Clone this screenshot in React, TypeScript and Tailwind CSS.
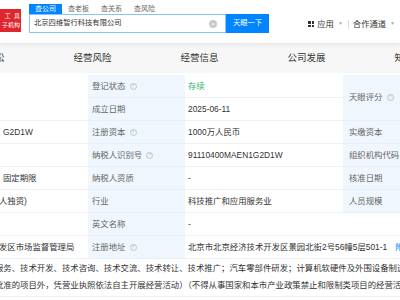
import React from "react";

const font = { fontFamily: '"Liberation Sans", "Noto Sans CJK SC", sans-serif' };

function Help() {
  return (
    <span className="ml-[4px] inline-flex h-[7px] w-[7px] items-center justify-center rounded-full border border-[#b9c6d8] text-[5px] leading-none text-[#b9c6d8]">
      ?
    </span>
  );
}

function Label({ children, help, className = "" }: { children: React.ReactNode; help?: boolean; className?: string }) {
  return (
    <div className={`flex items-center whitespace-nowrap border-b border-[#e6eef8] bg-[#eff6fd] pl-[4px] text-[#666] ${className}`}>
      {children}
      {help && <Help />}
    </div>
  );
}

function Value({ children, className = "" }: { children?: React.ReactNode; className?: string }) {
  return (
    <div className={`flex items-center overflow-hidden whitespace-nowrap border-b border-[#eef0f3] pl-[3px] text-[#333] ${className}`}>
      {children}
    </div>
  );
}

export default function App() {
  return (
    <div className="relative h-[300px] w-[400px] overflow-hidden bg-white" style={font}>
      {/* header */}
      <div className="relative z-10 flex h-[43px] bg-white shadow-[0_2px_4px_rgba(0,0,0,0.07)]">
        <div className="mt-[9px] flex h-[23px] w-[21px] flex-col items-end justify-center overflow-hidden bg-[#e0252c] pr-[1px] text-[6px] leading-[9px] text-white">
          <span className="whitespace-nowrap">工&nbsp;&nbsp;具</span>
          <span className="whitespace-nowrap">子机构</span>
        </div>

        <div className="ml-[8px] mt-[4px] flex flex-col">
          <div className="flex h-[10px] text-[7px] leading-[10px]">
            <span className="w-[33px] bg-[#0084ff] text-center text-white">查公司</span>
            <span className="w-[33px] text-center text-[#666]">查老板</span>
            <span className="w-[33px] text-center text-[#666]">查关系</span>
            <span className="w-[33px] text-center text-[#666]">查风险</span>
          </div>
          <div className="flex h-[19px]">
            <div className="flex w-[197px] items-center border border-[#86c1fc] pl-[4px] pr-[8px] text-[7.3px] text-[#333]">
              <span className="whitespace-nowrap">北京四维智行科技有限公司</span>
              <span className="ml-auto flex h-[8px] w-[8px] items-center justify-center rounded-full bg-[#c9c9c9] text-[6px] leading-none text-white">
                ×
              </span>
            </div>
            <div className="flex w-[43px] items-center justify-center bg-[#0084ff] text-[7.3px] text-white">天眼一下</div>
          </div>
        </div>

        <div className="ml-auto mt-[19px] flex h-[10px] items-center pr-[5px] text-[8.3px] text-[#333]">
          <span className="grid h-[6px] w-[6px] grid-cols-2 gap-[1px]">
            <span className="bg-[#333]" />
            <span className="bg-[#333]" />
            <span className="bg-[#333]" />
            <span className="bg-[#333]" />
          </span>
          <span className="ml-[3px]">应用</span>
          <span className="ml-[4px] text-[5px] text-[#aaa]">▼</span>
          <span className="ml-[5px] h-[9px] w-px bg-[#ddd]" />
          <span className="ml-[4px]">合作通道</span>
          <span className="ml-[4px] text-[5px] text-[#aaa]">▼</span>
        </div>
      </div>

      {/* nav */}
      <div className="flex h-[30px] items-center bg-[#f7f7f7] text-[9.5px] text-[#333]">
        <div className="-ml-[68px] flex">
          <span className="w-[107px] text-center">司法诉讼</span>
          <span className="w-[107px] text-center">经营风险</span>
          <span className="w-[107px] text-center">经营信息</span>
          <span className="w-[107px] text-center">公司发展</span>
          <span className="w-[107px] text-center">知识产权</span>
        </div>
      </div>

      {/* table */}
      <div className="mt-[2px] grid grid-cols-[88px_97px_158px_1fr] auto-rows-[23px] text-[8.4px]">
        <Value className="row-span-2" />
        <Label help>登记状态</Label>
        <Value>
          <span className="text-[#2db36b]">存续</span>
        </Value>
        <Label help className="row-span-2 pl-[6px]">天眼评分</Label>

        <Label>成立日期</Label>
        <Value>2025-06-11</Value>

        <Value className="pl-0">G2D1W</Value>
        <Label help>注册资本</Label>
        <Value>1000万人民币</Value>
        <Label className="pl-[6px]">实缴资本</Label>

        <Value />
        <Label help>纳税人识别号</Label>
        <Value>91110400MAEN1G2D1W</Value>
        <Label className="pl-[6px]">组织机构代码</Label>

        <Value className="pl-0">固定期限</Value>
        <Label>纳税人资质</Label>
        <Value>-</Value>
        <Label className="pl-[6px]">核准日期</Label>

        <Value className="pl-0">
          <span className="-ml-[4px]">人独资)</span>
        </Value>
        <Label>行业</Label>
        <Value>科技推广和应用服务业</Value>
        <Label className="pl-[6px]">人员规模</Label>

        <Value />
        <Label>英文名称</Label>
        <Value className="col-span-2">-</Value>

        <Value className="pl-0">
          <span className="-ml-[4px]">发区市场监督管理局</span>
        </Value>
        <Label help>注册地址</Label>
        <Value className="col-span-2">
          北京市北京经济技术开发区景园北街2号56幢5层501-1
          <span className="ml-[8px] text-[#0084ff]">附近公司</span>
        </Value>
      </div>

      {/* business scope */}
      <div className="border-b border-[#eef0f3] pt-[1px] pb-[2px] text-[8.4px] leading-[17px] text-[#333]">
        <div className="-ml-[5px] whitespace-nowrap">
          服务、技术开发、技术咨询、技术交流、技术转让、技术推广；汽车零部件研发；计算机软硬件及外围设备制造
        </div>
        <div className="-ml-[5px] whitespace-nowrap">
          批准的项目外，凭营业执照依法自主开展经营活动）（不得从事国家和本市产业政策禁止和限制类项目的经营活动。）
        </div>
      </div>
    </div>
  );
}
